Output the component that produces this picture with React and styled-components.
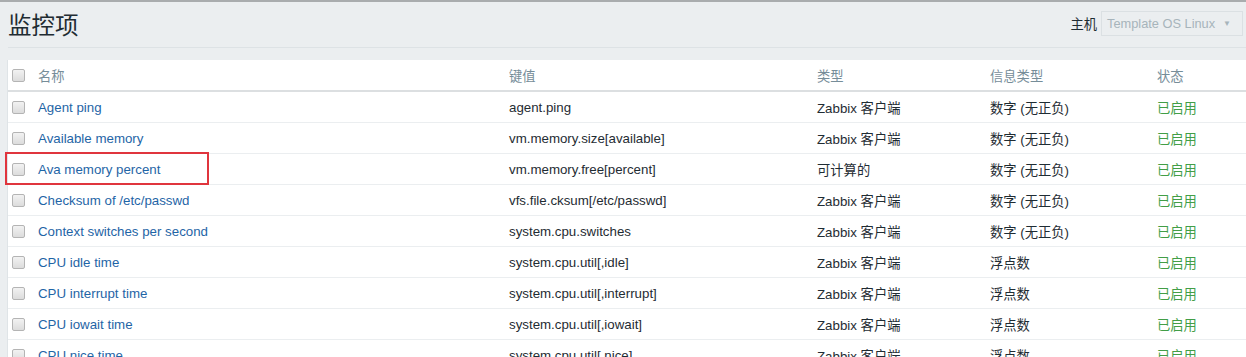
import styled, { createGlobalStyle } from 'styled-components'

const GlobalStyle = createGlobalStyle`
    html, body {
        margin: 0;
        padding: 0;
        background-color: #ebeef0;
    }
    body {
        font-family: "Liberation Sans", Arial, "Noto Sans CJK SC", sans-serif;
        font-size: 13.3px;
        color: #1f2c33;
        border-top: 2px solid #a9acae;
        overflow: hidden;
    }
`;

const Page = styled.div`
    padding: 0 0 0 7px;
`;

const Header = styled.div`
    display: flex;
    align-items: center;
    justify-content: space-between;
    height: 45px;
    margin-left: 1px;
    border-bottom: 1px solid #dde2e5;
`;

const Title = styled.h1`
    margin: 0;
    font-size: 23.5px;
    font-weight: normal;
    color: #1f2c33;
    position: relative;
    top: -1px;
`;

const HostFilter = styled.div`
    display: flex;
    align-items: center;
    margin-right: 3px;
`;

const HostLabel = styled.span`
    margin-right: 4px;
    position: relative;
    top: -1px;
`;

const Select = styled.div`
    display: flex;
    align-items: center;
    justify-content: space-between;
    box-sizing: border-box;
    width: 142px;
    height: 25px;
    padding: 0 11px 0 5px;
    border: 1px solid #dbe0e3;
    background-color: #ebeef0;
    color: #a7b4bb;
    font-size: 12.8px;
    position: relative;
    top: -1px;
`;

const Arrow = styled.span`
    font-size: 8px;
    color: #a7b4bb;
`;

const Table = styled.div`
    margin-top: 12px;
    background-color: #fff;
    border-left: 1px solid #dfe4e7;
`;

const Row = styled.div`
    position: relative;
    display: grid;
    grid-template-columns: 30px 471px 308px 173px 167px 1fr;
    align-items: center;
    height: 30px;
    border-bottom: ${props => props.head ? "2px solid #dcdfe1" : "1px solid #ebeef0"};
    color: ${props => props.head ? "#768d99" : "#1f2c33"};
`;

const Cell = styled.div`
    white-space: nowrap;
    color: ${props => props.tone === "link" ? "#1f65a6" : props.tone === "green" ? "#429e47" : "inherit"};
`;

const CheckCell = styled.div`
    display: flex;
    align-items: center;
    padding-left: 4px;
`;

const Checkbox = styled.span`
    display: inline-block;
    box-sizing: border-box;
    width: 13px;
    height: 13px;
    border: 1px solid #b4b4b4;
    border-radius: 2px;
    background: linear-gradient(#f2f2f2, #dcdcdc);
`;

const Highlight = styled.div`
    position: absolute;
    left: -3px;
    top: -2px;
    width: 204px;
    height: 33px;
    box-sizing: border-box;
    border: 2px solid #e0353d;
    pointer-events: none;
`;

const items = [
    ["Agent ping", "agent.ping", "Zabbix 客户端", "数字 (无正负)"],
    ["Available memory", "vm.memory.size[available]", "Zabbix 客户端", "数字 (无正负)"],
    ["Ava memory percent", "vm.memory.free[percent]", "可计算的", "数字 (无正负)", true],
    ["Checksum of /etc/passwd", "vfs.file.cksum[/etc/passwd]", "Zabbix 客户端", "数字 (无正负)"],
    ["Context switches per second", "system.cpu.switches", "Zabbix 客户端", "数字 (无正负)"],
    ["CPU idle time", "system.cpu.util[,idle]", "Zabbix 客户端", "浮点数"],
    ["CPU interrupt time", "system.cpu.util[,interrupt]", "Zabbix 客户端", "浮点数"],
    ["CPU iowait time", "system.cpu.util[,iowait]", "Zabbix 客户端", "浮点数"],
    ["CPU nice time", "system.cpu.util[,nice]", "Zabbix 客户端", "浮点数"],
];

const App = () => {
  return (
    <Page>
        <GlobalStyle />
        <Header>
            <Title>监控项</Title>
            <HostFilter>
                <HostLabel>主机</HostLabel>
                <Select>
                    <span>Template OS Linux</span>
                    <Arrow>▼</Arrow>
                </Select>
            </HostFilter>
        </Header>
        <Table>
            <Row head>
                <CheckCell><Checkbox /></CheckCell>
                <Cell>名称</Cell>
                <Cell>键值</Cell>
                <Cell>类型</Cell>
                <Cell>信息类型</Cell>
                <Cell>状态</Cell>
            </Row>
            {items.map(([name, key, type, info, marked]) => (
                <Row key={name}>
                    <CheckCell><Checkbox /></CheckCell>
                    <Cell tone="link">{name}</Cell>
                    <Cell>{key}</Cell>
                    <Cell>{type}</Cell>
                    <Cell>{info}</Cell>
                    <Cell tone="green">已启用</Cell>
                    {marked && <Highlight />}
                </Row>
            ))}
        </Table>
    </Page>
  );
};

export default App
